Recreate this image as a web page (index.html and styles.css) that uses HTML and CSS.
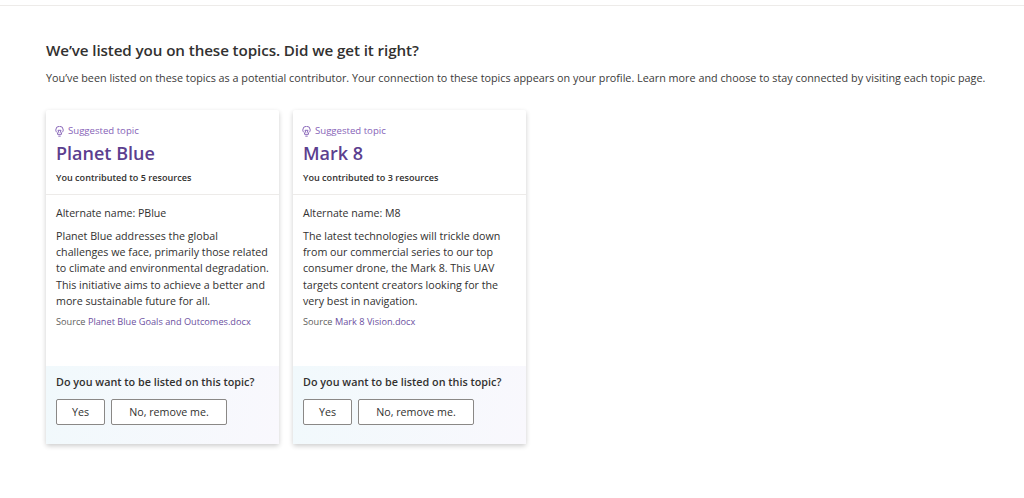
FILE: index.html
```html
<!DOCTYPE html>
<html lang="en">
<head>
    <meta charset="UTF-8">
    <meta name="viewport" content="width=device-width, initial-scale=1.0">
    <title>Suggested topics</title>
    <link rel="stylesheet" href="styles.css">
</head>
<body>
    <main class="page">
        <h1 class="page-title">We’ve listed you on these topics. Did we get it right?</h1>
        <p class="page-intro">You’ve been listed on these topics as a potential contributor. Your connection to these topics appears on your profile. Learn more and choose to stay connected by visiting each topic page.</p>

        <div class="cards">
            <article class="card">
                <header class="card-head">
                    <div class="suggested">
                        <svg class="bulb" viewBox="0 0 12 14" width="9" height="11" fill="none" stroke="currentColor" stroke-width="1.3"><path d="M3.4 8.8C2 7.9 1 6.5 1 5a5 5 0 0 1 10 0c0 1.5-1 2.9-2.4 3.8v2H3.4z"/><path d="M4.4 13.2h3.2M5 8.6 4 5.4M7 8.6l1-3.2M4 5.4h4"/></svg>
                        <span>Suggested topic</span>
                    </div>
                    <h2 class="topic-name">Planet Blue</h2>
                    <div class="contrib">You contributed to 5 resources</div>
                </header>
                <div class="card-body">
                    <div class="alt-name">Alternate name: PBlue</div>
                    <p class="desc">Planet Blue addresses the global challenges we face, primarily those related to climate and environmental degradation. This initiative aims to achieve a better and more sustainable future for all.</p>
                    <div class="source">Source <a href="#">Planet Blue Goals and Outcomes.docx</a></div>
                </div>
                <footer class="card-foot">
                    <div class="question">Do you want to be listed on this topic?</div>
                    <div class="actions">
                        <button class="btn btn-yes">Yes</button>
                        <button class="btn btn-no">No, remove me.</button>
                    </div>
                </footer>
            </article>

            <article class="card">
                <header class="card-head">
                    <div class="suggested">
                        <svg class="bulb" viewBox="0 0 12 14" width="9" height="11" fill="none" stroke="currentColor" stroke-width="1.3"><path d="M3.4 8.8C2 7.9 1 6.5 1 5a5 5 0 0 1 10 0c0 1.5-1 2.9-2.4 3.8v2H3.4z"/><path d="M4.4 13.2h3.2M5 8.6 4 5.4M7 8.6l1-3.2M4 5.4h4"/></svg>
                        <span>Suggested topic</span>
                    </div>
                    <h2 class="topic-name">Mark 8</h2>
                    <div class="contrib">You contributed to 3 resources</div>
                </header>
                <div class="card-body">
                    <div class="alt-name">Alternate name: M8</div>
                    <p class="desc">The latest technologies will trickle down from our commercial series to our top consumer drone, the Mark 8. This UAV targets content creators looking for the very best in navigation.</p>
                    <div class="source">Source <a href="#">Mark 8 Vision.docx</a></div>
                </div>
                <footer class="card-foot">
                    <div class="question">Do you want to be listed on this topic?</div>
                    <div class="actions">
                        <button class="btn btn-yes">Yes</button>
                        <button class="btn btn-no">No, remove me.</button>
                    </div>
                </footer>
            </article>
        </div>
    </main>
</body>
</html>
```

FILE: styles.css
```css
body {
    margin: 0;
    background: #fff;
    color: #323130;
    font-family: 'Open Sans', 'Noto Sans', sans-serif;
}
.page {
    border-top: 1px solid #edebe9;
    margin-top: 5px;
    padding: 32px 0 20px 46px;
}
.page-title {
    margin: 0;
    font-size: 15.2px;
    letter-spacing: -0.1px;
    line-height: 24px;
    font-weight: 600;
}
.page-intro {
    margin: 8px 0 0;
    font-size: 10.8px;
    line-height: 16px;
    white-space: nowrap;
    color: #3b3a39;
}
.cards {
    display: flex;
    gap: 14px;
    margin-top: 24px;
}
.card {
    width: 233px;
    height: 334px;
    display: flex;
    flex-direction: column;
    background: #fff;
    border-radius: 2px;
    box-shadow: 0 2px 5px rgba(0,0,0,0.2);
}
.card-head {
    height: 85px;
    padding: 14px 10px 0;
    box-sizing: border-box;
    border-bottom: 1px solid #edebe9;
}
.suggested {
    display: flex;
    align-items: center;
    gap: 4px;
    margin-left: -1px;
    font-size: 9.6px;
    line-height: 14px;
    color: #8764b8;
}
.bulb {
    flex: none;
}
.topic-name {
    margin: 2px 0 0;
    font-size: 18px;
    line-height: 26px;
    font-weight: 600;
    color: #5c3f8f;
}
.contrib {
    margin-top: 5px;
    font-size: 9.1px;
    line-height: 14px;
    font-weight: 600;
}
.card-body {
    flex: 1;
    padding: 11px 10px 0;
}
.alt-name {
    font-size: 10.6px;
    line-height: 15px;
}
.desc {
    margin: 7px 0 0;
    font-size: 10.7px;
    line-height: 16.2px;
}
.source {
    margin-top: 6px;
    font-size: 9.2px;
    line-height: 14px;
    color: #605e5c;
}
.source a {
    color: #6b4fa0;
    text-decoration: none;
}
.card-foot {
    height: 78px;
    padding: 8px 10px 0;
    box-sizing: border-box;
    background: linear-gradient(100deg, #f1f9fc, #f9f8fd);
}
.question {
    font-size: 10.8px;
    line-height: 16px;
    font-weight: 600;
}
.actions {
    display: flex;
    gap: 6px;
    margin-top: 9px;
}
.btn {
    height: 26px;
    padding: 0;
    background: #fff;
    border: 1px solid #8a8886;
    border-radius: 2px;
    color: #323130;
    font-family: inherit;
    font-size: 10.7px;
    font-weight: 500;
}
.btn-yes {
    width: 49px;
}
.btn-no {
    width: 116px;
}
```
